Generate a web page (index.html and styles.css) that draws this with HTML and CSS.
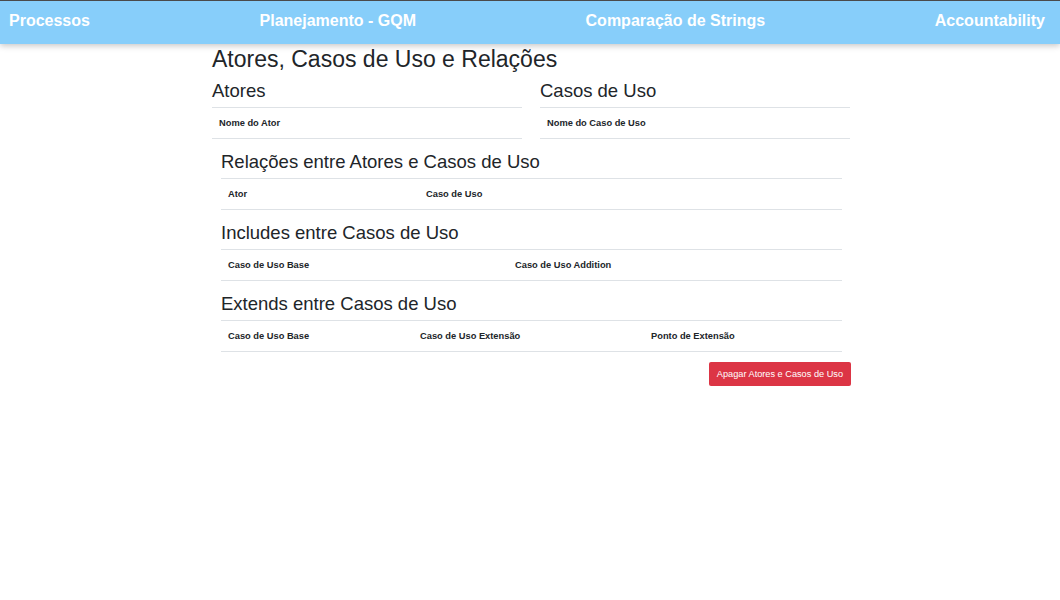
FILE: index.html
```html
<!DOCTYPE html>
<html lang="pt">
<head>
<meta charset="utf-8">
<title>Atores, Casos de Uso e Relações</title>
<link rel="stylesheet" href="styles.css">
</head>
<body>
<nav class="topbar">
  <a class="nav-link">Processos</a>
  <a class="nav-link">Planejamento - GQM</a>
  <a class="nav-link">Comparação de Strings</a>
  <a class="nav-link">Accountability</a>
</nav>
<main class="container">
  <h1 class="page-title">Atores, Casos de Uso e Relações</h1>
  <div class="two-cols">
    <section class="col">
      <h2 class="col-title">Atores</h2>
      <table class="tbl">
        <thead><tr><th>Nome do Ator</th></tr></thead>
      </table>
    </section>
    <section class="col">
      <h2 class="col-title">Casos de Uso</h2>
      <table class="tbl">
        <thead><tr><th>Nome do Caso de Uso</th></tr></thead>
      </table>
    </section>
  </div>
  <div class="inner">
    <section class="block">
      <h3 class="block-title">Relações entre Atores e Casos de Uso</h3>
      <table class="tbl wide">
        <thead><tr><th class="w198">Ator</th><th>Caso de Uso</th></tr></thead>
      </table>
    </section>
    <section class="block">
      <h3 class="block-title">Includes entre Casos de Uso</h3>
      <table class="tbl wide">
        <thead><tr><th class="w287">Caso de Uso Base</th><th>Caso de Uso Addition</th></tr></thead>
      </table>
    </section>
    <section class="block">
      <h3 class="block-title">Extends entre Casos de Uso</h3>
      <table class="tbl wide">
        <thead><tr><th class="w192">Caso de Uso Base</th><th class="w231">Caso de Uso Extensão</th><th>Ponto de Extensão</th></tr></thead>
      </table>
    </section>
  </div>
  <div class="actions">
    <button class="btn-danger" type="button">Apagar Atores e Casos de Uso</button>
  </div>
</main>
</body>
</html>
```
FILE: styles.css
```css
* { box-sizing: border-box; }
html, body { margin: 0; padding: 0; background: #fff; }
body {
  font-family: "Liberation Sans", Arial, sans-serif;
  color: #212529;
}
.topbar {
  display: flex;
  justify-content: space-between;
  align-items: center;
  height: 44px;
  padding: 0 15px 0 9px;
  background: #87cefa;
  border-top: 1px solid #4a4a4a;
  box-shadow: 0 2px 6px rgba(0,0,0,0.22);
}
.nav-link {
  color: #fff;
  font-weight: bold;
  font-size: 16px;
  text-decoration: none;
  line-height: 1;
  margin-top: -3px;
}
.container {
  width: 640px;
  margin: 0 auto;
  padding-left: 2px;
  padding-top: 1px;
}
.page-title {
  font-size: 23px;
  font-weight: normal;
  margin: 0;
  line-height: 28px;
}
.two-cols {
  display: flex;
  gap: 18px;
}
.col { flex: 1 1 0; }
.col-title {
  font-size: 18.5px;
  font-weight: normal;
  margin: 5px 0 0;
  line-height: 26px;
  padding-bottom: 3px;
}
.tbl {
  width: 100%;
  border-collapse: collapse;
}
.tbl th {
  text-align: left;
  font-size: 9.3px;
  font-weight: bold;
  padding: 0 7px;
  height: 31px;
  border-top: 1px solid #dee2e6;
  border-bottom: 1px solid #dee2e6;
  vertical-align: middle;
}
.inner {
  padding: 0 9px;
  margin-right: -1px;
}
.block-title {
  font-size: 18.5px;
  font-weight: normal;
  margin: 0;
  line-height: 24px;
  padding-top: 11px;
  padding-bottom: 4px;
}
.w198 { width: 198px; }
.w287 { width: 287px; }
.w192 { width: 192px; }
.w231 { width: 231px; }
.actions {
  display: flex;
  justify-content: flex-end;
  margin-top: 10px;
  margin-right: -1px;
}
.btn-danger {
  background: #dc3545;
  color: #fff;
  border: none;
  border-radius: 2px;
  font-family: "Liberation Sans", Arial, sans-serif;
  font-size: 9.2px;
  height: 24px;
  padding: 0 8px;
}
```
